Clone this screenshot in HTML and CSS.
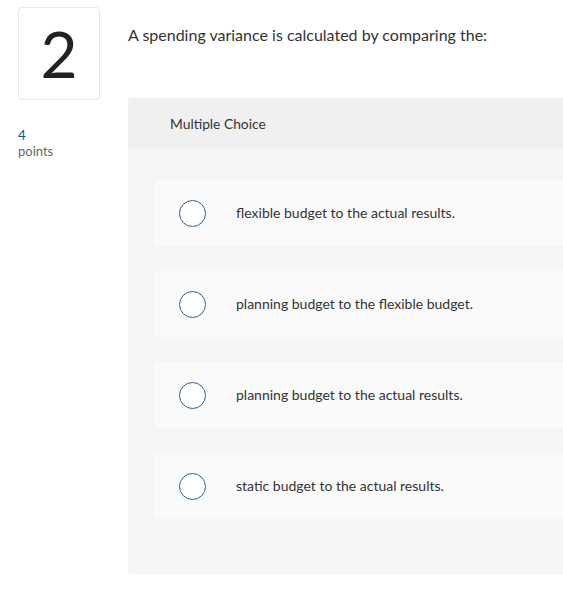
FILE: index.html
```html
<!DOCTYPE html>
<html>
<head>
<meta charset="utf-8">
<link rel="stylesheet" href="styles.css">
</head>
<body>
<div class="question">
  <div class="side">
    <div class="num-box">2</div>
    <div class="points"><span class="pts-value">4</span><span class="pts-label">points</span></div>
  </div>
  <div class="main">
    <p class="prompt">A spending variance is calculated by comparing the:</p>
    <div class="card">
      <div class="card-header">Multiple Choice</div>
      <div class="card-body">
        <div class="option"><span class="radio"></span><span class="opt-text">flexible budget to the actual results.</span></div>
        <div class="option"><span class="radio"></span><span class="opt-text">planning budget to the flexible budget.</span></div>
        <div class="option"><span class="radio"></span><span class="opt-text">planning budget to the actual results.</span></div>
        <div class="option"><span class="radio"></span><span class="opt-text">static budget to the actual results.</span></div>
      </div>
    </div>
  </div>
</div>
</body>
</html>
```
FILE: styles.css
```css
html, body { margin: 0; padding: 0; overflow: hidden; background: #fff; }
body { font-family: "Lato", "Open Sans", sans-serif; color: #333; }
.question { display: flex; padding: 7px 0 0 18px; }
.side { width: 82px; flex-shrink: 0; margin-right: 28px; }
.num-box {
  width: 80px; height: 91px; border: 1px solid #e6e6e6; border-radius: 4px;
  display: flex; align-items: center; justify-content: center;
  font-family: "Lato", sans-serif; font-size: 64px; font-weight: 400; color: #222;
  line-height: 1;
}
.points { margin-top: 28px; display: flex; flex-direction: column; }
.pts-value { color: #1f4e79; font-size: 13.5px; line-height: 15px; }
.pts-label { color: #666; font-size: 13px; line-height: 16px; }
.main { flex: 0 0 460px; }
.prompt { margin: 18px 0 0 0; font-size: 16px; line-height: 19px; color: #333; }
.card { margin-top: 54px; border-radius: 4px; overflow: hidden; background: #f5f5f5; }
.card-header { background: #f0f0f0; height: 50px; display: flex; align-items: center; padding-left: 42px; font-size: 13.8px; color: #333; }
.card-body { padding: 32px 0 55px 26px; display: flex; flex-direction: column; gap: 25px; }
.option { background: #fafafa; height: 66px; border-radius: 3px; display: flex; align-items: center; padding-left: 25px; }
.radio { width: 25px; height: 25px; border: 1.5px solid #2f5f8f; border-radius: 50%; background: #fff; flex-shrink: 0; }
.opt-text { margin-left: 30px; margin-bottom: 2px; font-size: 14px; color: #333; }
```
